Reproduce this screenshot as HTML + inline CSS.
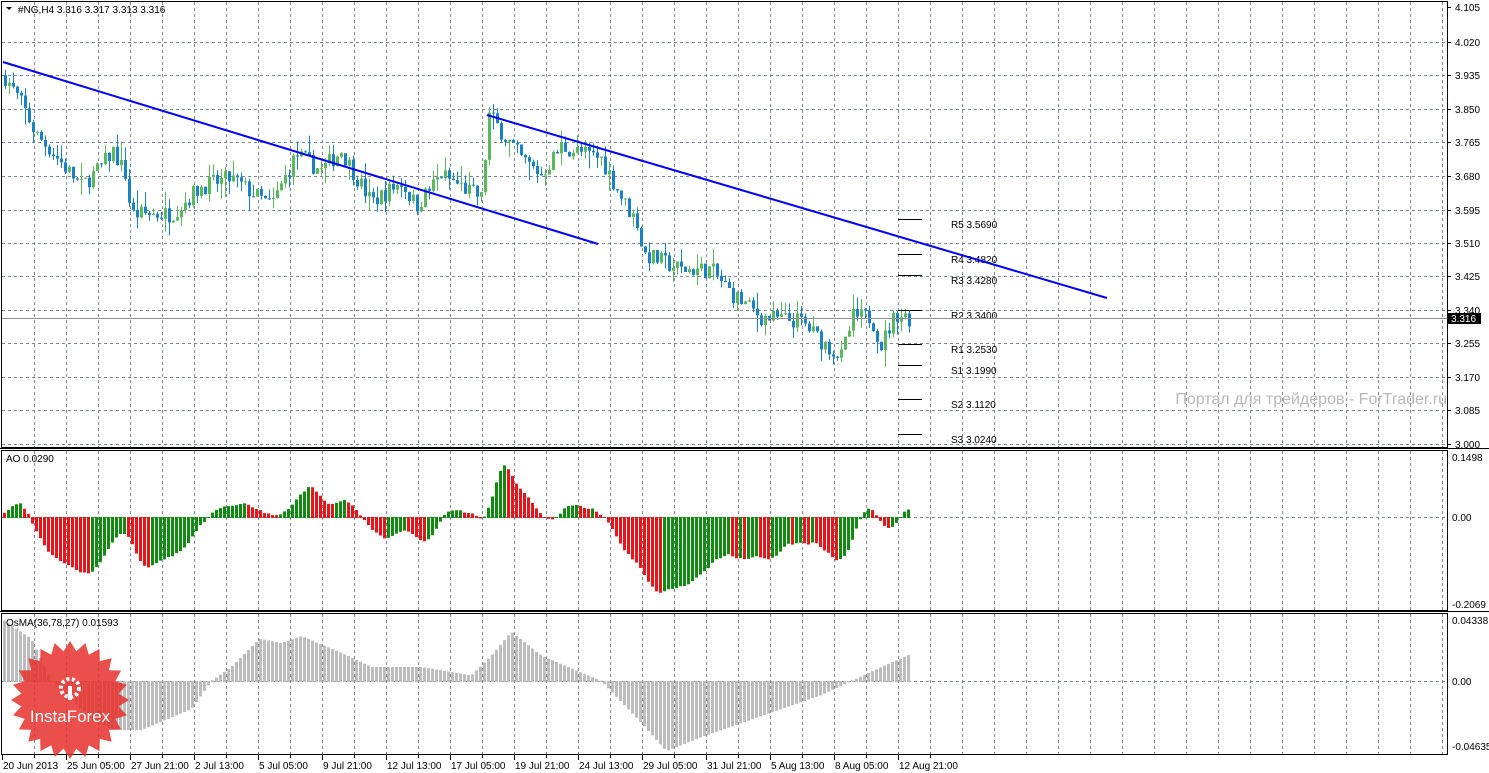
<!DOCTYPE html>
<html><head><meta charset="utf-8"><style>
html,body{margin:0;padding:0;background:#fff;width:1489px;height:773px;overflow:hidden}
svg{display:block;font-family:"Liberation Sans",sans-serif}
</style></head><body>
<svg id="s" width="1489" height="773" xmlns="http://www.w3.org/2000/svg">
<rect width="1489" height="773" fill="#fff"/>
<g id="grid"></g>
<g id="bars"></g>
<g id="ao"></g>
<g id="os"></g>
<g stroke="#000" stroke-width="1">
<line x1="898" y1="219.5" x2="922" y2="219.5"/><line x1="898" y1="254.5" x2="922" y2="254.5"/>
<line x1="898" y1="275.5" x2="922" y2="275.5"/><line x1="898" y1="310.5" x2="922" y2="310.5"/>
<line x1="898" y1="344.5" x2="922" y2="344.5"/><line x1="898" y1="365.5" x2="922" y2="365.5"/>
<line x1="898" y1="399.5" x2="922" y2="399.5"/><line x1="898" y1="434.5" x2="922" y2="434.5"/>
</g>
<g font-size="10" fill="#000">
<text x="951" y="228">R5 3.5690</text><text x="951" y="263">R4 3.4820</text>
<text x="951" y="284">R3 3.4280</text><text x="951" y="319">R2 3.3400</text>
<text x="951" y="353">R1 3.2530</text><text x="951" y="374">S1 3.1990</text>
<text x="951" y="408">S2 3.1120</text><text x="951" y="443">S3 3.0240</text>
</g>
<line x1="2" y1="318.5" x2="1447" y2="318.5" stroke="#8a8f99" stroke-width="1"/>
<line x1="3" y1="62" x2="598" y2="244" stroke="#0000ff" stroke-width="2"/>
<line x1="487" y1="115" x2="1107" y2="298" stroke="#0000ff" stroke-width="2"/>
<text x="1447" y="404" font-size="16" fill="#b8b8b8" text-anchor="end">Портал для трейдеров - ForTrader.ru</text>
<g fill="none" stroke="#000" stroke-width="1">
<rect x="1.5" y="1.5" width="1446" height="446"/>
<rect x="1.5" y="450.5" width="1446" height="160"/>
<rect x="1.5" y="613.5" width="1446" height="141"/>
</g>
<line x1="0" y1="448.5" x2="1489" y2="448.5" stroke="#000"/>
<line x1="0" y1="611.5" x2="1489" y2="611.5" stroke="#000"/>
<text x="18" y="13" font-size="10">#NG,H4  3.316 3.317 3.313 3.316</text>
<path d="M6 7 L12 7 L9 10 Z" fill="#000"/>
<text x="6" y="462" font-size="10">AO 0.0290</text>
<text x="6" y="626" font-size="10">OsMA(36,78,27) 0.01593</text>
<g id="axis" font-size="10"></g>
<rect x="1448" y="313" width="33" height="11" fill="#000"/>
<text x="1451" y="322" font-size="10" fill="#fff">3.316</text>
<g transform="translate(70,700)">
<polygon id="star" fill="#e8302c" fill-opacity="0.85"/>
<g fill="#fff" transform="translate(0,-12)">
<circle cx="0" cy="0" r="9" fill="none" stroke="#fff" stroke-width="4" stroke-dasharray="3 2.5"/>
<rect x="-2" y="-2" width="4" height="14"/>
</g>
<text x="0" y="22" font-size="17" fill="#fff" text-anchor="middle">InstaForex</text>
</g>
</svg>
<script>
var NS="http://www.w3.org/2000/svg";
function el(p,t,a,txt){var e=document.createElementNS(NS,t);for(var k in a)e.setAttribute(k,a[k]);if(txt!==undefined)e.textContent=txt;document.getElementById(p).appendChild(e);return e;}
var gd="";
for(var x=34;x<1447;x+=32)gd+="M"+(x+.5)+" 2V447M"+(x+.5)+" 451V610M"+(x+.5)+" 614V754";
var py=[7,42,75,109,142,176,210,243,276,310,343,377,410,444];
for(var i=1;i<py.length;i++)gd+="M2 "+(py[i]+.5)+"H1447";
gd+="M2 517.5H1447M2 681.5H1447";
el("grid","path",{d:gd,stroke:"#7a8699","stroke-width":1,"stroke-dasharray":"3 3",fill:"none"});
var pl=["4.105","4.020","3.935","3.850","3.765","3.680","3.595","3.510","3.425","3.340","3.255","3.170","3.085","3.000"];
for(i=0;i<pl.length;i++){el("axis","line",{x1:1447,x2:1451,y1:py[i]+.5,y2:py[i]+.5,stroke:"#000"});el("axis","text",{x:1455,y:py[i]+4},pl[i]);}
[[457,"0.1498"],[517,"0.00"],[604,"-0.2069"],[620,"0.04338"],[681,"0.00"],[746,"-0.04635"]].forEach(function(a){el("axis","text",{x:1452,y:a[0]+4},a[1]);});
var dl=["20 Jun 2013","25 Jun 05:00","27 Jun 21:00","2 Jul 13:00","5 Jul 05:00","9 Jul 21:00","12 Jul 13:00","17 Jul 05:00","19 Jul 21:00","24 Jul 13:00","29 Jul 05:00","31 Jul 21:00","5 Aug 13:00","8 Aug 05:00","12 Aug 21:00"];
for(i=0;i<dl.length;i++){var tx=2+64*i;el("axis","line",{x1:tx+.5,x2:tx+.5,y1:755,y2:760,stroke:"#000"});el("axis","text",{x:tx+1,y:769},dl[i]);}
for(i=0;i<29;i++){var tx=34+32*i;el("axis","line",{x1:tx+.5,x2:tx+.5,y1:755,y2:758,stroke:"#000"});}
var kp=[[3,3.93],[20,3.86],[35,3.78],[50,3.74],[80,3.65],[100,3.70],[112,3.74],[124,3.68],[130,3.58],[170,3.58],[200,3.65],[230,3.67],[270,3.60],[295,3.73],[320,3.69],[340,3.74],[370,3.61],[400,3.66],[415,3.60],[440,3.68],[480,3.62],[488,3.83],[520,3.72],[540,3.68],[560,3.75],[600,3.72],[625,3.60],[636,3.56],[642,3.48],[680,3.44],[710,3.44],[730,3.38],[760,3.32],[800,3.31],[820,3.26],[840,3.22],[852,3.32],[870,3.32],[880,3.25],[895,3.33],[910,3.316]];
function interp(x){for(var j=0;j<kp.length-1;j++){if(x<=kp[j+1][0]){var t=(x-kp[j][0])/(kp[j+1][0]-kp[j][0]);return kp[j][1]+t*(kp[j+1][1]-kp[j][1]);}}return kp[kp.length-1][1];}
function Y(p){return 444-(p-3.0)/0.085*33.7;}
var seed=7;function rnd(){seed=(seed*16807)%2147483647;return seed/2147483647;}
var N=227,O=[],C=[],H=[],L=[];
var prev=interp(3);
for(i=0;i<N;i++){var x=4+i*4;var c=interp(x)+(rnd()-0.5)*0.045;var o=prev;var h=Math.max(o,c)+rnd()*rnd()*0.05;var l=Math.min(o,c)-rnd()*rnd()*0.05;O.push(o);C.push(c);H.push(h);L.push(l);prev=c;}
var bd="",gdp="",bw="",gw="";
for(i=0;i<N;i++){var x=4+i*4;var up=C[i]>=O[i];var yt=Y(Math.max(O[i],C[i])),yb=Y(Math.min(O[i],C[i]));if(yb-yt<1)yb=yt+1;
var w="M"+(x+1.5)+" "+Y(H[i])+"V"+Y(L[i]);var b="M"+x+" "+yt+"h3V"+yb+"h-3Z";
if(up){gw+=w;gdp+=b;}else{bw+=w;bd+=b;}}
el("bars","path",{d:bw,stroke:"#1a82c4","stroke-width":1,fill:"none"});
el("bars","path",{d:gw,stroke:"#5cb85c","stroke-width":1,fill:"none"});
el("bars","path",{d:bd,fill:"#1a82c4"});
el("bars","path",{d:gdp,fill:"#5cb85c"});
function sma(a,n,i){var s=0,c=0;for(var k=Math.max(0,i-n+1);k<=i;k++){s+=a[k];c++;}return s/c;}
var M=[];for(i=0;i<N;i++)M.push((H[i]+L[i])/2);
var pre=[];for(i=0;i<40;i++)pre.push(3.86);var MM=pre.concat(M);
var AO=[];for(i=0;i<N;i++){var j=i+40;AO.push(sma(MM,5,j)-sma(MM,34,j));}
var ar="",ag="";
for(i=0;i<N;i++){var x=3+i*4;var v=AO[i];var y=v>=0?517-v/0.1498*60:517-v/0.2069*87;y=Math.max(452,Math.min(609,y));var up=i>0&&AO[i]>AO[i-1];
var d="M"+x+" "+Math.min(y,517)+"h3V"+Math.max(y,518)+"h-3Z";if(up)ag+=d;else ar+=d;}
el("ao","path",{d:ar,fill:"#e8161b"});el("ao","path",{d:ag,fill:"#118a11"});
var ok=[[3,0.043],[30,0.03],[50,0],[80,-0.02],[110,-0.035],[140,-0.035],[190,-0.02],[210,0],[230,0.01],[258,0.03],[280,0.027],[300,0.032],[340,0.02],[370,0.01],[420,0.01],[470,0.004],[490,0.018],[510,0.035],[540,0.018],[600,0],[640,-0.03],[665,-0.05],[700,-0.04],[760,-0.025],[820,-0.01],[850,0],[880,0.01],[912,0.02]];
function oi(x){for(var j=0;j<ok.length-1;j++){if(x<=ok[j+1][0]){var t=(x-ok[j][0])/(ok[j+1][0]-ok[j][0]);return ok[j][1]+t*(ok[j+1][1]-ok[j][1]);}}return ok[ok.length-1][1];}
var os="";
for(i=0;i<N;i++){var x=3+i*4;var v=oi(x);var y=v>=0?681-v/0.04338*61:681-v/0.04635*65;y=Math.max(616,Math.min(752,y));
os+="M"+x+" "+Math.min(y,681)+"h3V"+Math.max(y,682)+"h-3Z";}
el("os","path",{d:os,fill:"#bdbdbd"});
var pts=[];for(i=0;i<48;i++){var r=i%2?49:59;var a=Math.PI*2*i/48;pts.push((r*Math.sin(a)).toFixed(1)+","+(-r*Math.cos(a)).toFixed(1));}
document.getElementById("star").setAttribute("points",pts.join(" "));
</script>
</body></html>
